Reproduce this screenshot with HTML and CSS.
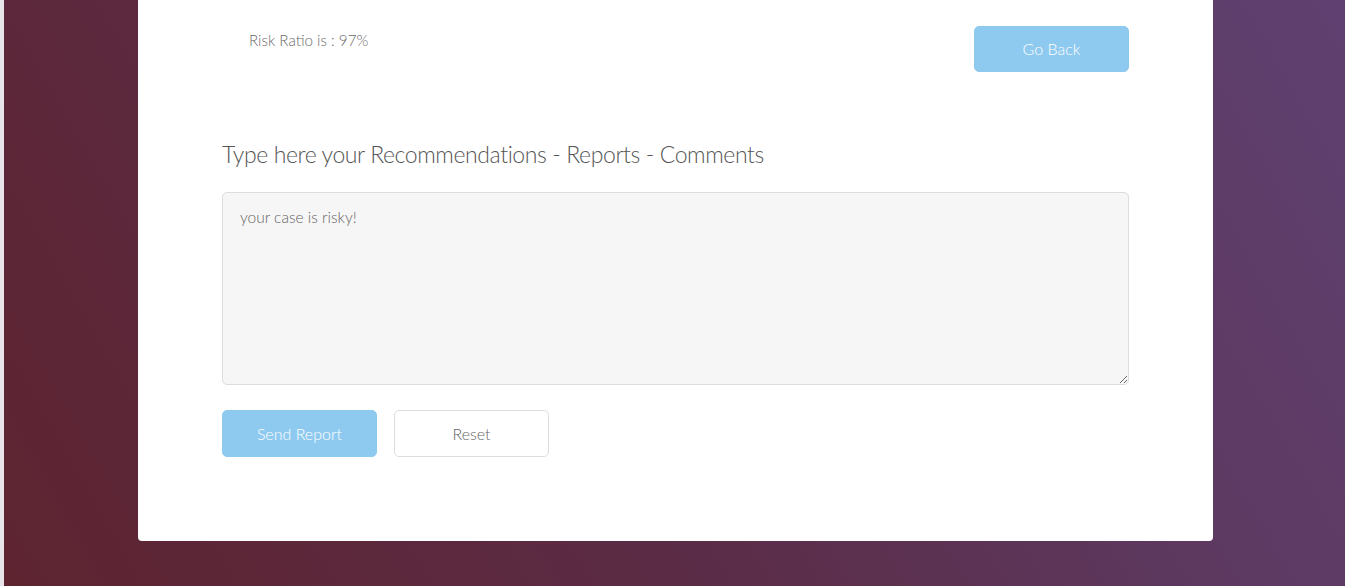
FILE: index.html
```html
<!DOCTYPE html>
<html>
<head>
<meta charset="utf-8">
<link rel="stylesheet" href="styles.css">
</head>
<body>
<div class="page">
  <div class="card">
    <div class="top-row">
      <p class="risk">Risk Ratio is : 97%</p>
      <button class="btn btn-primary">Go Back</button>
    </div>
    <h3 class="heading">Type here your Recommendations - Reports - Comments</h3>
    <textarea class="comments">your case is risky!</textarea>
    <div class="actions">
      <button class="btn btn-primary">Send Report</button>
      <button class="btn btn-default">Reset</button>
    </div>
  </div>
</div>
</body>
</html>
```
FILE: styles.css
```css
html, body {
  margin: 0;
  padding: 0;
  height: 100%;
  overflow: hidden;
}
body {
  font-family: Lato, "Open Sans", sans-serif;
  font-weight: 300;
  color: #777;
  border-left: 4px solid #e7e5ea;
  background: linear-gradient(60deg, #5e2430 0%, #5b2b45 40%, #5d3a62 75%, #5f4070 100%);
}
.page {
  padding-left: 134px;
}
.card {
  width: 907px;
  background: #fff;
  padding: 26px 84px 84px;
  border-radius: 0 0 4px 4px;
}
.top-row {
  display: flex;
  justify-content: space-between;
  align-items: flex-start;
}
.risk {
  margin: 4px 0 0 27px;
  font-size: 15.2px;
  line-height: 20px;
  color: #6a6a6a;
}
.btn {
  width: 155px;
  height: 46px;
  border-radius: 5px;
  font-family: inherit;
  font-weight: 300;
  font-size: 16px;
  padding-bottom: 2px;
  cursor: pointer;
}
.btn-primary {
  background: #8ec9ef;
  border: 1px solid #8ec9ef;
  color: #fff;
}
.btn-default {
  background: #fff;
  border: 1px solid #ddd;
  color: #666;
}
.heading {
  margin: 68px 0 24px;
  font-size: 23px;
  letter-spacing: -0.4px;
  font-weight: 300;
  line-height: 28px;
  color: #555;
}
.comments {
  display: block;
  box-sizing: border-box;
  width: 907px;
  height: 193px;
  margin: 0;
  padding: 15px 17px;
  background: #f6f6f6;
  border: 1px solid #ddd;
  border-radius: 5px;
  font-family: inherit;
  font-weight: 300;
  font-size: 15.5px;
  color: #666;
}
.actions {
  display: flex;
  gap: 17px;
  margin-top: 25px;
}
.actions .btn {
  height: 47px;
}
```
